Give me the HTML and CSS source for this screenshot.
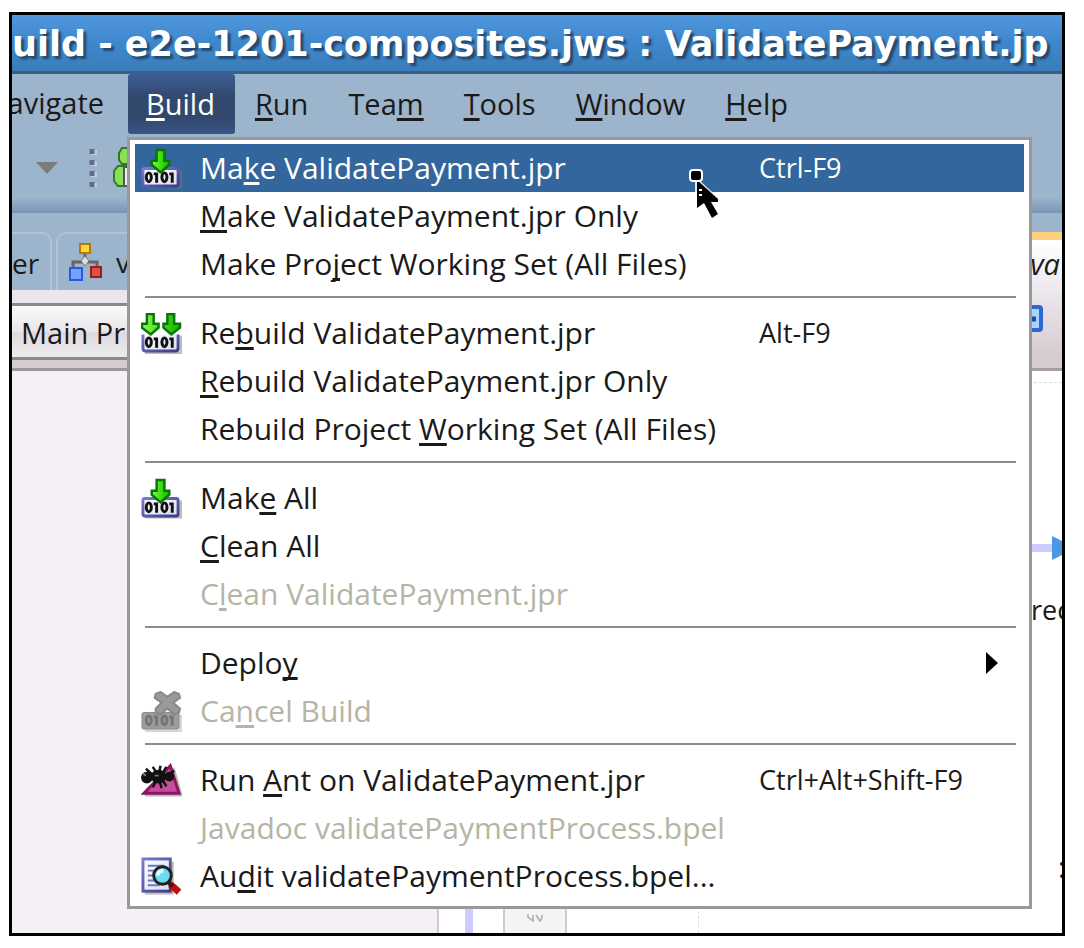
FILE: index.html
```html
<!DOCTYPE html>
<html lang="en">
<head>
<meta charset="utf-8">
<title>Build menu</title>
<link rel="stylesheet" href="styles.css">
</head>
<body>
<svg class="defs" aria-hidden="true">
  <defs>
    <linearGradient id="green" x1="0" x2="1"><stop offset="0" stop-color="#8cf55a"/><stop offset=".5" stop-color="#3fe010"/><stop offset="1" stop-color="#18b000"/></linearGradient>
    <linearGradient id="box" x1="0" y1="0" x2="1" y2="1"><stop offset="0" stop-color="#fff"/><stop offset="1" stop-color="#d9dcf2"/></linearGradient>
    <linearGradient id="edge" x1="0" y1="0" x2="1" y2="1"><stop offset="0" stop-color="#7a7ad8"/><stop offset="1" stop-color="#3c3c86"/></linearGradient>
    <g id="bits" fill="none" stroke-width="3">
      <ellipse cx="8" cy="30" rx="2.6" ry="4.500"/><path d="M13 26.500h3v9"/><ellipse cx="24" cy="30" rx="2.600" ry="4.500"/><path d="M29 26.500h3v9"/>
    </g>
    <symbol id="make" viewBox="0 0 42 42">
      <path d="M4 40h37V23" fill="none" stroke="#777" stroke-opacity=".5" stroke-width="3"/>
      <rect x="2" y="21" width="36" height="18" rx="2" fill="url(#box)" stroke="url(#edge)" stroke-width="3"/>
      <g stroke="#111"><use href="#bits"/></g>
      <path d="M16 2h8v11h5v4l-9 8-9-8v-4h5z" fill="url(#green)" stroke="#08740a" stroke-width="2.500"/>
    </symbol>
    <symbol id="rebuild" viewBox="0 0 42 42">
      <path d="M4 41h37V23" fill="none" stroke="#777" stroke-opacity=".5" stroke-width="3"/>
      <path d="M2 22v14q0 3 3 3h30q3 0 3-3V22" fill="url(#box)" stroke="url(#edge)" stroke-width="3"/>
      <g stroke="#111"><use href="#bits"/></g>
      <path d="M6 1h7v10h5v4l-8 7-9-7v-4h5zM27 1h7v10h6v4l-9 7-8-7v-4h4z" fill="url(#green)" stroke="#08740a" stroke-width="2.500"/>
    </symbol>
    <symbol id="cancel" viewBox="0 0 42 42">
      <path d="M4 41h37V24" fill="none" stroke="#999" stroke-opacity=".4" stroke-width="3"/>
      <rect x="1" y="22" width="38" height="17" rx="2" fill="#9c9c9c" stroke="#8a8a8a"/>
      <g stroke="#757575"><use href="#bits"/></g>
      <path d="M15 3l5-2 7 5 7-5 5 2 1 4-7 5 7 6-1 4-5 2-7-6-7 6-5-2v-4l6-6-7-5z" fill="#999" stroke="#888" stroke-width="2"/>
    </symbol>
    <symbol id="ant" viewBox="0 0 42 42">
      <path d="M4 36h37L33 8" fill="none" stroke="#888" stroke-opacity=".6" stroke-width="3"/>
      <path d="M3 34L30 6l9 28z" fill="#c54d9b" stroke="#8e1462" stroke-width="3"/>
      <g fill="#111"><circle cx="6" cy="18" r="6"/><ellipse cx="18" cy="17" rx="8" ry="7"/><ellipse cx="29" cy="17" rx="5" ry="5"/></g>
      <path d="M12 7l6 9 2-10M12 28l6-11 3 12M26 7l-6 10 6 10M5 9l9 8M34 11l-10 7M2 18h30" fill="none" stroke="#111" stroke-width="2.500"/>
      <path d="M2 14l3 2M14 16h4" stroke="#777" stroke-width="2"/>
    </symbol>
    <symbol id="audit" viewBox="0 0 42 42">
      <path d="M4 38h28V6" fill="none" stroke="#777" stroke-opacity=".5" stroke-width="3"/>
      <rect x="2" y="3" width="28" height="33" fill="url(#box)" stroke="url(#edge)" stroke-width="3"/>
      <path d="M7 10h17M7 15h10M7 20h7M7 25h8M7 30h12" stroke="#6b78c4" stroke-width="2"/>
      <path d="M30 29l9 8" stroke="#c40d0d" stroke-width="7"/>
      <path d="M28 27l4 4" stroke="#222" stroke-width="4"/>
      <circle cx="22" cy="20" r="9" fill="#69dcf2" stroke="#222" stroke-width="3"/>
      <path d="M17 20q1-5 6-5" fill="none" stroke="#e4fcff" stroke-width="4"/>
    </symbol>
  </defs>
</svg>
<main class="window">
  <h1 class="title">uild - e2e-1201-composites.jws : ValidatePayment.jp</h1>
  <nav class="menubar" aria-label="Main menu">
    <button class="top clipped">avigate</button>
    <button class="top open" aria-expanded="true"><u>B</u>uild</button>
    <button class="top"><u>R</u>un</button>
    <button class="top">Tea<u>m</u></button>
    <button class="top"><u>T</u>ools</button>
    <button class="top"><u>W</u>indow</button>
    <button class="top"><u>H</u>elp</button>
  </nav>
  <div class="toolbar">
    <svg class="caret" viewBox="0 0 22 12"><path d="M0 0h22L11 12z" fill="#7b7b7b"/></svg>
    <svg class="grip" viewBox="0 0 8 38"><path d="M5 1v37" stroke="#c5cddd" stroke-width="6" stroke-dasharray="5 6"/><path d="M3 0v38" stroke="#5f6d8c" stroke-width="5" stroke-dasharray="5 6"/></svg>
    <svg class="team" viewBox="0 0 30 42"><g fill="#8bdd5c" stroke="#2e7d1c" stroke-width="2"><path d="M9 1h12v16H9l-3-4V6z"/><path d="M5 19h18v20H5l-4-5V24z"/></g><path d="M11 20h10v19H11z" fill="#eee" stroke="#555" stroke-width="2"/></svg>
  </div>
  <div class="workspace">
    <section class="navigator">
      <div class="tabs">
        <button class="tab first">er</button>
        <button class="tab second">
          <svg class="flow" viewBox="0 0 36 40"><path d="M17 12v6M5 26v-6h24v6" fill="none" stroke="#666" stroke-width="3"/><path d="M17 14l4 5-4 5-4-5z" fill="#ddd" stroke="#777"/><rect x="12" y="2" width="10" height="9" fill="#ffd83a" stroke="#b87800" stroke-width="2"/><rect x="2" y="26" width="12" height="12" fill="#74a3ff" stroke="#2a56e8" stroke-width="2"/><rect x="23" y="25" width="10" height="10" fill="#d9504a" stroke="#a01c18" stroke-width="2"/></svg>
          <span>v</span>
        </button>
      </div>
      <div class="strip"></div>
      <h2 class="pane-title">Main Pr</h2>
      <div class="rule"></div>
      <div class="pane"></div>
    </section>
    <section class="editor">
      <div class="editor-gap"></div>
      <div class="editor-tab"><em>va</em>
        <svg class="chip" viewBox="0 0 30 28"><rect x="2" y="2" width="25" height="23" rx="2" fill="#a9d4ff" stroke="#2f66cf" stroke-width="4"/><path d="M14 14h8" stroke="#1d4cae" stroke-width="5"/></svg>
      </div>
      <div class="canvas">
        <div class="guide"></div>
        <svg class="arrow" viewBox="0 0 60 26"><path d="M0 13h50" stroke="#ccccff" stroke-width="8"/><path d="M50 1l10 5v14l-10 5z" fill="#4a98e4"/></svg>
        <div class="label">rec</div>
        <div class="colon">:</div>
        <div class="lanes">
          <div class="lane line"></div>
          <div class="lane gutter"><svg viewBox="0 0 16 10"><path d="M1 1v3l5 4V2M9 2l4 6q2-1 2-6" fill="none" stroke="#aaa" stroke-width="1.500"/></svg></div>
          <div class="lane dashed"></div>
        </div>
      </div>
    </section>
  </div>

  <div class="menu" role="menu" aria-label="Build">
    <div class="group">
      <button class="item active" role="menuitem"><svg><use href="#make"/></svg><span>Ma<u>k</u>e ValidatePayment.jpr</span><kbd>Ctrl-F9</kbd></button>
      <button class="item" role="menuitem"><span><u>M</u>ake ValidatePayment.jpr Only</span></button>
      <button class="item" role="menuitem"><span>Make Pro<u>j</u>ect Working Set (All Files)</span></button>
    </div>
    <div class="group">
      <button class="item" role="menuitem"><svg><use href="#rebuild"/></svg><span>Re<u>b</u>uild ValidatePayment.jpr</span><kbd>Alt-F9</kbd></button>
      <button class="item" role="menuitem"><span><u>R</u>ebuild ValidatePayment.jpr Only</span></button>
      <button class="item" role="menuitem"><span>Rebuild Project <u>W</u>orking Set (All Files)</span></button>
    </div>
    <div class="group">
      <button class="item" role="menuitem"><svg><use href="#make"/></svg><span>Mak<u>e</u> All</span></button>
      <button class="item" role="menuitem"><span><u>C</u>lean All</span></button>
      <button class="item" role="menuitem" disabled><span>C<u>l</u>ean ValidatePayment.jpr</span></button>
    </div>
    <div class="group">
      <button class="item" role="menuitem" aria-haspopup="true"><span>Deplo<u>y</u></span><svg class="more" viewBox="0 0 12 22"><path d="M0 0l12 11L0 22z"/></svg></button>
      <button class="item" role="menuitem" disabled><svg><use href="#cancel"/></svg><span>Ca<u>n</u>cel Build</span></button>
    </div>
    <div class="group">
      <button class="item" role="menuitem"><svg><use href="#ant"/></svg><span>Run <u>A</u>nt on ValidatePayment.jpr</span><kbd>Ctrl+Alt+Shift-F9</kbd></button>
      <button class="item" role="menuitem" disabled><span>Javadoc validatePaymentProcess.bpel</span></button>
      <button class="item" role="menuitem"><svg><use href="#audit"/></svg><span>Au<u>d</u>it validatePaymentProcess.bpel...</span></button>
    </div>
  </div>
  <svg class="pointer" viewBox="0 0 34 54"><path d="M8 14h4l22 20-6 4-2 0 6 12-6 4-8-12-10 4z" fill="#fff" opacity=".85"/><path d="M10 14v28l7-5 8 15 6-4-7-12h7v-3z"/><rect x="3" y="4" width="12" height="11" rx="3" stroke="#fff" stroke-width="2"/><path d="M12 24h3M12 29h3" stroke="#fff" stroke-width="2"/></svg>
</main>
</body>
</html>
```
FILE: styles.css
```css
* { box-sizing: border-box; }
body { margin: 0; background: #fff; color: #1a1a1a; font-family: "Open Sans", "Noto Sans", sans-serif; font-size: 29px; }
button { font: inherit; color: inherit; background: none; border: 0; padding: 0; margin: 0; text-align: left; white-space: nowrap; }
svg { display: block; flex: none; }
u { text-decoration: underline; text-decoration-thickness: 3px; text-underline-offset: 3px; text-decoration-skip-ink: none; }
.defs { position: absolute; width: 0; height: 0; }

.window { position: relative; display: flex; flex-direction: column; min-height: calc(100vh - 24px); margin: 12px 19px 12px 9px; border: 3px solid #000; overflow: hidden; background: #9cb4cc; }
.title { margin: 0; height: 59px; line-height: 58px; border-bottom: 3px solid #3a5f85; background: linear-gradient(#5097dc, #3f87cd 50%, #3a7cb8); color: #fff; font-family: "DejaVu Sans", sans-serif; font-size: 35px; font-weight: bold; white-space: nowrap; overflow: hidden; text-shadow: 3px 3px 2px #24496e; }

.menubar { display: flex; height: 62px; }
.top { height: 60px; padding: 0 20px; line-height: 58px; }
.top.clipped { width: 116px; padding: 0 24px 0 0; display: flex; justify-content: flex-end; overflow: hidden; }
.top.open { padding: 0 20px 0 18px; border-radius: 3px; color: #fff; background: linear-gradient(#3d5d96, #32486c 40%, #32486c 70%, #385587); }

.toolbar { display: flex; align-items: center; height: 77px; padding: 0 0 13px 24px; background: linear-gradient(#9cb4cc 80%, #7895b6); }
.caret { width: 22px; height: 12px; }
.grip { width: 8px; height: 38px; margin-left: 31px; }
.team { width: 30px; height: 42px; margin-left: 16px; }

.workspace { display: flex; flex: 1; }
.navigator { display: flex; flex-direction: column; flex: 0 0 427px; border-right: 2px solid #d0c8d0; }
.tabs { display: flex; height: 77px; padding-top: 19px; }
.tab { line-height: 58px; border: 2px solid #b0c3da; border-bottom: 0; font-size: 28px; }
.tab.first { width: 40px; border-left: 0; border-radius: 0 10px 0 0; }
.tab.second { display: flex; flex: 1; gap: 12px; align-items: center; margin-left: 4px; padding-left: 10px; border-radius: 10px 0 0 0; overflow: hidden; }
.flow { width: 36px; height: 40px; }
.strip { height: 13px; background: #ece6ec; }
.pane-title { margin: 0; padding-left: 9px; height: 57px; line-height: 53px; border: solid #8c898c; border-width: 3px 0; background: linear-gradient(#faf9fa, #e9e6e9 50%, #ddd9dd 51%, #efecef); font-size: 29px; font-weight: normal; }
.rule { height: 11px; background: #d6cccf; border-bottom: 3px solid #999; }
.pane { flex: 1; background: #f5f0f5; }

.editor { display: flex; flex-direction: column; flex: 1; background: #fff; }
.editor-gap { height: 19px; background: #9cb4cc; }
.editor-tab { display: flex; flex-direction: column; align-items: flex-end; height: 139px; padding-right: 2px; border-top: 8px solid #ffcf80; border-bottom: 3px solid #a89ea1; background: linear-gradient(#fff, #ece8ee 40%, #d6cccf 90%); }
.editor-tab em { line-height: 48px; height: 65px; }
.chip { width: 30px; height: 28px; margin-right: 16px; }
.canvas { display: flex; flex-direction: column; align-items: flex-end; flex: 1; }
.guide { width: 100%; height: 12px; border-bottom: 1px dashed #ddd; }
.arrow { width: 60px; height: 26px; margin-top: 152px; }
.label { width: 31px; height: 40px; margin-top: 30px; line-height: 38px; font-size: 27px; overflow: hidden; }
.colon { width: 4px; margin-top: 220px; height: 36px; line-height: 32px; overflow: hidden; }
.lanes { display: flex; width: 100%; flex: 1; padding-left: 26px; }
.lane.line { width: 8px; background: #ccccff; }
.lane.gutter { display: flex; justify-content: center; align-items: flex-end; width: 64px; margin-left: 30px; padding-bottom: 10px; border: solid #ccc; border-width: 0 2px; background: #f4f4f4; }
.lane.gutter svg { width: 16px; height: 10px; }
.lane.dashed { width: 132px; border-right: 1px dashed #ddd; }

.menu { position: absolute; top: 122px; left: 115px; right: 30px; padding: 4px 5px 6px; border: 3px solid #999; background: #fff; color: #1a1a1a; font-size: 30px; }
.group + .group { position: relative; padding-top: 21px; }
.group + .group::before { content: ""; position: absolute; top: 8px; left: 10px; right: 8px; height: 2px; background: #8c8c8c; }
.item { display: grid; grid-template-columns: 41px 541px 1fr; column-gap: 18px; align-items: center; width: 100%; height: 48px; padding-left: 6px; line-height: 46px; }
.item svg { width: 41px; height: 41px; }
.item span { grid-column: 2; }
.item kbd { font: inherit; font-size: 27px; }
.item .more { justify-self: end; width: 12px; height: 22px; margin-right: 26px; }
.item.active { background: #32669c; color: #fff; }
.item:disabled { color: #b5b5a5; }
.pointer { position: absolute; top: 151px; left: 675px; width: 34px; height: 54px; }
```
